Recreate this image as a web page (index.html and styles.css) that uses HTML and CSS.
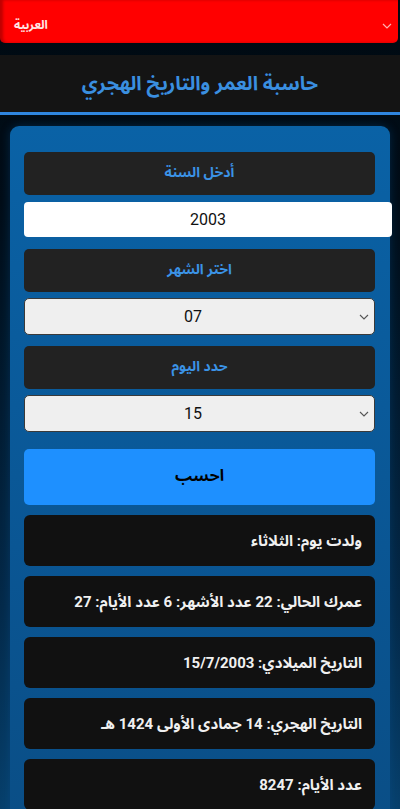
FILE: index.html
```html
<!DOCTYPE html>
<html lang="ar">
<head>
<meta charset="utf-8">
<title>حاسبة العمر والتاريخ الهجري</title>
<link rel="stylesheet" href="styles.css">
</head>
<body>
<div class="lang-bar">
  <span class="lang-text">العربية</span>
  <svg class="lang-chev" width="10" height="6" viewBox="0 0 10 6"><path d="M1 1 L5 5 L9 1" fill="none" stroke="#ffb0b0" stroke-width="1.2"/></svg>
</div>
<header class="header">
  <h1 class="title">حاسبة العمر والتاريخ الهجري</h1>
</header>
<main class="card" dir="rtl">
  <div class="label">أدخل السنة</div>
  <div class="input-year">2003</div>
  <div class="label">اختر الشهر</div>
  <div class="select"><span class="sel-val">07</span><svg class="sel-chev" width="10" height="6" viewBox="0 0 10 6"><path d="M1 1 L5 5 L9 1" fill="none" stroke="#555" stroke-width="1.1"/></svg></div>
  <div class="label">حدد اليوم</div>
  <div class="select"><span class="sel-val">15</span><svg class="sel-chev" width="10" height="6" viewBox="0 0 10 6"><path d="M1 1 L5 5 L9 1" fill="none" stroke="#555" stroke-width="1.1"/></svg></div>
  <div class="btn">احسب</div>
  <div class="results">
    <div class="result">ولدت يوم: الثلاثاء</div>
    <div class="result">عمرك الحالي: 22 عدد الأشهر: 6 عدد الأيام: 27</div>
    <div class="result">التاريخ الميلادي: 15/7/2003</div>
    <div class="result">التاريخ الهجري: 14 جمادى الأولى 1424 هـ</div>
    <div class="result">عدد الأيام: 8247</div>
  </div>
</main>
</body>
</html>
```

FILE: styles.css
```css
html, body {
  margin: 0;
  padding: 0;
  height: 809px;
  overflow: hidden;
}
body {
  background: linear-gradient(#000a12 0%, #000d18 25%, #042a4a 75%, #07406c 100%);
  font-family: Roboto, "Noto Sans Arabic", "Noto Naskh Arabic", "Noto Sans", "DejaVu Sans", sans-serif;
}
.lang-bar {
  height: 43px;
  width: 398px;
  background: #ff0000;
  border-radius: 0 0 5px 5px;
  box-shadow: inset 3px 0 3px rgba(0,0,0,0.25);
  display: flex;
  align-items: center;
  justify-content: space-between;
  padding: 7px 6px 0 14px;
  box-sizing: border-box;
}
.lang-text {
  color: #ffe6e6;
  font-size: 12px;
  font-weight: bold;
}
.lang-chev { margin-top: 2px; }
.header {
  margin-top: 12px;
  height: 57px;
  background: #141414;
  border-bottom: 3px solid #2f86e0;
  display: flex;
  align-items: center;
  justify-content: center;
}
.title {
  margin: 0;
  color: #3a8fe0;
  font-size: 19.5px;
  font-weight: bold;
  padding-bottom: 1px;
}
.card {
  margin: 11px 10px 0 10px;
  height: 700px;
  background: linear-gradient(#0a62a6, #0a5694 60%, #0a4e86);
  border-radius: 9px;
  box-shadow: 0 0 10px rgba(10, 90, 160, 0.35);
  padding: 26px 15px 0 14px;
  box-sizing: border-box;
  display: flex;
  flex-direction: column;
  align-items: stretch;
}
.label {
  height: 43px;
  background: #222222;
  border-radius: 5px;
  display: flex;
  align-items: center;
  justify-content: center;
  color: #3b93e6;
  font-weight: bold;
  font-size: 14px;
  padding-bottom: 2px;
  box-sizing: border-box;
}
.input-year {
  margin-top: 7px;
  margin-right: -17px;
  height: 35px;
  background: #ffffff;
  border-radius: 4px;
  display: flex;
  align-items: center;
  justify-content: center;
  color: #111;
  font-size: 16px;
  margin-bottom: 12px;
}
.select {
  margin-top: 6px;
  height: 37px;
  background: #efefef;
  border: 1px solid #3a3a3a;
  border-radius: 5px;
  box-sizing: border-box;
  display: flex;
  align-items: center;
  justify-content: center;
  position: relative;
  color: #111;
  font-size: 16px;
  margin-bottom: 11px;
}
.sel-val { margin-right: 13px; }
.sel-chev {
  position: absolute;
  right: 5px;
  top: 15px;
}
.btn {
  margin-top: 6px;
  height: 56px;
  background: #1e90ff;
  border-radius: 5px;
  display: flex;
  align-items: center;
  justify-content: center;
  color: #000;
  font-size: 16px;
  font-weight: bold;
  padding-bottom: 2px;
  box-sizing: border-box;
}
.results {
  margin-top: 10px;
  display: flex;
  flex-direction: column;
  gap: 10px;
}
.result {
  height: 51px;
  background: #111111;
  border-radius: 6px;
  display: flex;
  align-items: center;
  padding-right: 13px;
  color: #f0f0f0;
  font-size: 15px;
  font-weight: bold;
}
```
